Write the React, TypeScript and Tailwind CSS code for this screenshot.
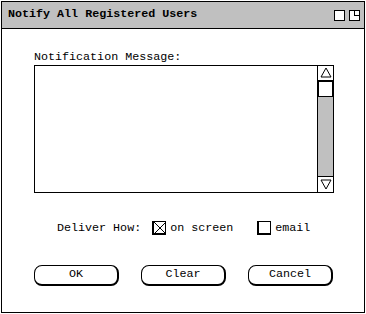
const mono = { fontFamily: '"Liberation Mono", "Courier New", monospace' };

function TitleIcons() {
  return (
    <div className="flex items-center gap-[4px]">
      <div className="h-[11px] w-[11px] border border-black bg-white" />
      <div className="relative h-[11px] w-[11px] border border-black bg-white">
        <div className="absolute right-0 top-0 h-[5px] w-[5px] border-b border-l border-black" />
      </div>
    </div>
  );
}

function Scrollbar() {
  return (
    <div className="flex w-[16px] flex-col border-l border-black">
      <div className="flex h-[15px] items-center justify-center border-b border-black bg-white">
        <svg width="12" height="11" viewBox="0 0 12 11">
          <path d="M6 1 L11 10 L1 10 Z" fill="none" stroke="black" strokeWidth="1" />
        </svg>
      </div>
      <div className="h-[16px] border-[1.5px] border-black bg-white" />
      <div className="flex-1 bg-[#c0c0c0]" />
      <div className="flex h-[16px] items-center justify-center border-t border-black bg-white">
        <svg width="12" height="11" viewBox="0 0 12 11">
          <path d="M1 1 L11 1 L6 10 Z" fill="none" stroke="black" strokeWidth="1" />
        </svg>
      </div>
    </div>
  );
}

function Checkbox({ checked, label }: { checked: boolean; label: string }) {
  return (
    <div className="flex items-center gap-[4px]">
      <div className="relative h-[14px] w-[14px] border border-b-2 border-l-2 border-black bg-white">
        {checked && (
          <svg className="absolute inset-0" width="12" height="12" viewBox="0 0 12 12">
            <path d="M0 0 L12 12 M12 0 L0 12" stroke="black" strokeWidth="1" />
          </svg>
        )}
      </div>
      <span>{label}</span>
    </div>
  );
}

function Button({ label }: { label: string }) {
  return (
    <button className="flex h-[21px] w-[85px] items-center justify-center rounded-[8px] border border-b-2 border-r-2 border-black bg-white text-[11.7px] leading-none">
      {label}
    </button>
  );
}

export default function App() {
  return (
    <div className="h-[314px] w-[366px] bg-white pl-[1px] pt-[1px]" style={mono}>
      <div className="flex h-[312px] w-[364px] flex-col border border-black">
        <div className="flex h-[27px] items-center justify-between border-b border-black bg-[#c0c0c0] pl-[6px] pr-[4px]">
          <span className="text-[11.7px] font-bold leading-none">Notify All Registered Users</span>
          <TitleIcons />
        </div>
        <div className="flex flex-col pl-[32px] pt-[23px] text-[11.7px]">
          <div className="leading-none">Notification Message:</div>
          <div className="mt-[1px] flex h-[128px] w-[300px] border border-black bg-white">
            <div className="flex-1" />
            <Scrollbar />
          </div>
          <div className="mt-[27px] flex items-center pl-[23px]">
            <span className="mr-[11px]">Deliver How:</span>
            <Checkbox checked label="on screen" />
            <div className="w-[24px]" />
            <Checkbox checked={false} label="email" />
          </div>
          <div className="mt-[28px] flex gap-[22px]">
            <Button label="OK" />
            <Button label="Clear" />
            <Button label="Cancel" />
          </div>
        </div>
      </div>
    </div>
  );
}
